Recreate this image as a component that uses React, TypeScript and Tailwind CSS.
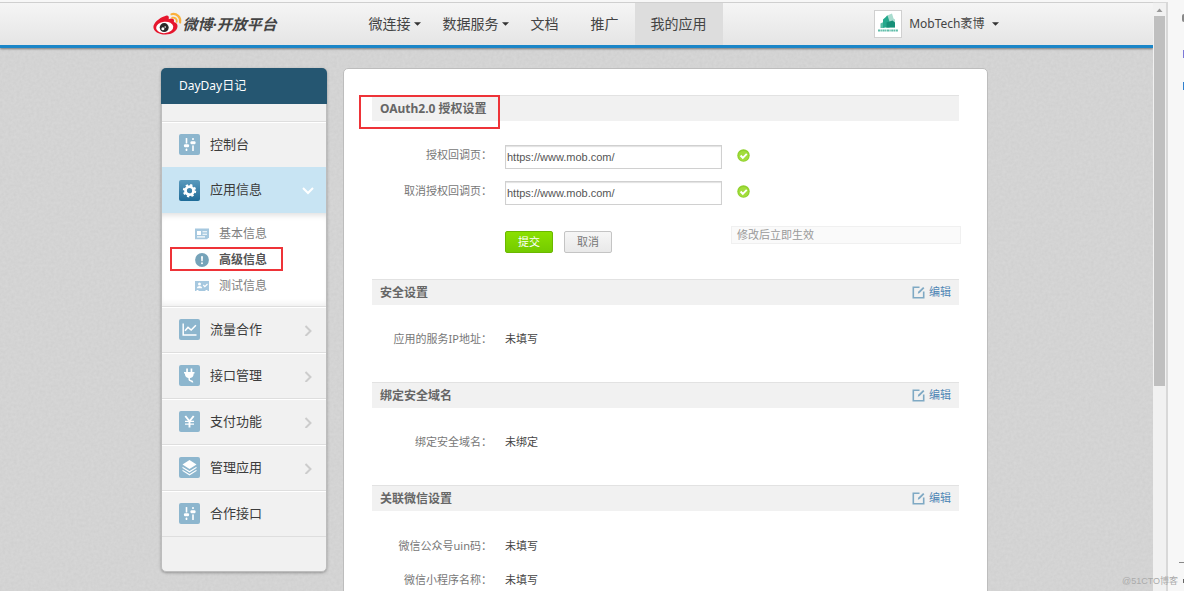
import React, { useState } from "react";

type IconProps = { className?: string };

const WeiboLogo = () => (
  <svg viewBox="0 0 30 24" className="h-6 w-[30px] shrink-0" aria-hidden="true">
    <path
      d="M11.600 4.200C15 2.600 16.400 4.400 15.700 7.200c3.300-1.300 6-.7 5.200 2.700 2.700.9 3.800 2.400 3.600 4.600-.4 4.700-5.600 8-12 8C5.600 22.500.4 19.300.4 14.900c0-3.800 5.600-9 11.200-10.700z"
      fill="#e6162d"
    />
    <ellipse cx="11.700" cy="15.400" rx="8.600" ry="5.700" fill="#fff" transform="rotate(-6 11.700 15.400)" />
    <circle cx="11.200" cy="15.600" r="4.500" fill="#2a2a2a" />
    <circle cx="9.900" cy="16.800" r="1.500" fill="#fff" />
    <circle cx="12.200" cy="15" r=".8" fill="#fff" />
    <path d="M18.500 2.200c5-1.200 9.700 2.800 8.600 8.300" fill="none" stroke="#fbb03b" strokeWidth="2.200" strokeLinecap="round" />
    <path d="M19.200 5.700c2.700-.6 5.100 1.400 4.500 4.200" fill="none" stroke="#fbb03b" strokeWidth="1.900" strokeLinecap="round" />
  </svg>
);

const Caret = () => (
  <svg viewBox="0 0 8 4" className="h-1 w-[7px] shrink-0" aria-hidden="true">
    <path d="M0 0h8L4 4z" fill="#333" />
  </svg>
);

const Sliders = () => (
  <g fill="#fff">
    <rect x="6.700" y="4" width="1.600" height="5.500" rx=".6" />
    <rect x="5" y="10.300" width="5" height="3" rx="1" />
    <rect x="6.700" y="14.600" width="1.600" height="2.400" rx=".6" />
    <rect x="13.200" y="4" width="1.600" height="2" rx=".6" />
    <rect x="11.500" y="7.300" width="5" height="3" rx="1" />
    <rect x="13.200" y="11.300" width="1.600" height="5.700" rx=".6" />
  </g>
);

const Gear = () => (
  <g>
    <circle cx="10.500" cy="10.700" r="4" fill="none" stroke="#fff" strokeWidth="2.800" />
    <circle cx="10.500" cy="10.700" r="5.700" fill="none" stroke="#fff" strokeWidth="2" strokeDasharray="2.240 2.240" />
  </g>
);

const Chart = () => (
  <g fill="none" stroke="#fff" strokeWidth="1.500">
    <path d="M4.200 4.500v11.500h13.300" />
    <path d="M6 11.800l3-3.400 3.200 2.700 4.700-4.800" />
  </g>
);

const Plug = () => (
  <g fill="#fff">
    <rect x="7.200" y="3.500" width="1.700" height="4" />
    <rect x="11.600" y="3.500" width="1.700" height="4" />
    <path d="M5 7h10.500v1.600h-.8c0 3-1.600 4.600-4.400 4.600S5.900 11.600 5.900 8.600H5z" />
    <path d="M10.200 12v2.500c0 2 3.400.4 3.400 3" fill="none" stroke="#fff" strokeWidth="1.500" />
  </g>
);

const Yen = () => (
  <g fill="none" stroke="#fff" strokeWidth="1.900">
    <path d="M6.300 5l4.200 5.300L14.700 5M10.500 10v6.500" />
    <path d="M6 10.300h9M6 13.100h9" strokeWidth="1.300" />
  </g>
);

const Layers = () => (
  <g fill="#fff">
    <path d="M10.500 3l7 4.500-7 4.500-7-4.500z" />
    <path d="M3.500 9.700l7 4.400 7-4.400v1.400l-7 4.400-7-4.400z" />
    <path d="M3.500 12.700l7 4.400 7-4.400v1.400l-7 4.400-7-4.400z" />
  </g>
);

const IconTile = ({ active, children }: { active?: boolean; children: React.ReactNode }) => (
  <svg
    viewBox="0 0 21 21"
    aria-hidden="true"
    className={
      active
        ? "size-[21px] shrink-0 rounded-xs bg-linear-to-b from-[#5a9abd] to-[#1d6b98]"
        : "size-[21px] shrink-0 rounded-xs bg-[#8db6ce]"
    }
  >
    {children}
  </svg>
);

const CardIcon = ({ className }: IconProps) => (
  <svg viewBox="0 0 14 14" className={className} aria-hidden="true">
    <path d="M0 1.500h14v8.800l-2 2H0z" fill="#a6c8df" />
    <rect x="2" y="4" width="4" height="4" fill="#fff" />
    <path d="M7.500 4.700H12M7.500 7.200H12M2 9.900h8" stroke="#fff" strokeWidth="1.100" />
  </svg>
);

const AlertIcon = ({ className }: IconProps) => (
  <svg viewBox="0 0 14 14" className={className} aria-hidden="true">
    <circle cx="7" cy="7" r="6.900" fill="#76a3b9" />
    <path d="M6 3.300h2L7.700 8.300H6.300z" fill="#fff" />
    <circle cx="7" cy="10.200" r="1" fill="#fff" />
  </svg>
);

const TesterIcon = ({ className }: IconProps) => (
  <svg viewBox="0 0 14 14" className={className} aria-hidden="true">
    <path d="M0 2h14v10h-1.500v-1h-2v1h-7v-1h-2v1H0z" fill="#a6c8df" />
    <circle cx="4.500" cy="5" r="1.500" fill="#fff" />
    <path d="M1.800 9.200c.3-3 5.100-3 5.400 0z" fill="#fff" />
    <path d="M8.300 6l1.500 1.600L12.500 5" fill="none" stroke="#fff" strokeWidth="1.200" />
  </svg>
);

const EditIcon = () => (
  <svg viewBox="0 0 13 13" className="size-[13px]" fill="none" stroke="#7fa9c4" strokeWidth="1.600" aria-hidden="true">
    <path d="M7.500 1.300H1.300v10.400h10.400V5.500" />
    <path d="M5.800 7.800l.4-2 4.900-4.900 1.300 1.300-4.800 4.900z" fill="#7fa9c4" stroke="none" />
  </svg>
);

const OkIcon = () => (
  <svg viewBox="0 0 13 13" className="mt-1 size-[13px]" role="img" aria-label="正确">
    <circle cx="6.500" cy="6.500" r="6.200" fill="#8fd02c" />
    <circle cx="6.500" cy="6.900" r="5" fill="#a2dd3c" />
    <path d="M3.600 6.500l2.200 2.400 4-4" fill="none" stroke="#fff" strokeWidth="1.900" />
  </svg>
);

const Chevron = ({ down }: { down?: boolean }) => (
  <svg viewBox="0 0 12 12" className="ml-auto size-3" fill="none" strokeWidth="2" aria-hidden="true">
    {down ? <path d="M1 4l5 5 5-5" stroke="#fff" /> : <path d="M3.500 2l5 5-5 5" stroke="#ccc" />}
  </svg>
);

const rowClass =
  "flex h-[46px] items-center gap-[10px] border-t border-t-[#dedede] pr-3 pl-[17px] text-[13px] text-[#3c3c3c] shadow-[inset_0_1px_0_#fff]";

const NavRow = ({ label, icon, arrow }: { label: string; icon: React.ReactNode; arrow?: boolean }) => (
  <li>
    <a href="#" className={rowClass}>
      <IconTile>{icon}</IconTile>
      {label}
      {arrow && <Chevron />}
    </a>
  </li>
);

const SubRow = ({ label, icon, current }: { label: string; icon: React.ReactNode; current?: boolean }) => (
  <li className="relative">
    <a
      href="#"
      className={
        current
          ? "flex h-[26px] items-center gap-[10px] pl-[33px] text-xs font-bold text-[#555]"
          : "flex h-[26px] items-center gap-[10px] pl-[33px] text-xs text-[#808080]"
      }
    >
      {icon}
      {label}
    </a>
    {current && <span className="absolute top-0 right-[43px] bottom-0.5 left-2 border-2 border-[#ee3338]" />}
  </li>
);

const SectionHead = ({ title, editable, marked }: { title: string; editable?: boolean; marked?: boolean }) => (
  <div className="relative flex h-[26px] items-center justify-between border-t border-[#e2e2e2] bg-[#f1f1f1] px-2">
    <h2 className="text-xs font-bold text-[#666]">{title}</h2>
    {editable && (
      <a href="#" className="flex items-center gap-1 text-[11px] text-[#4f86b5]">
        <EditIcon />
        编辑
      </a>
    )}
    {marked && <span className="absolute -top-px -left-[13px] h-[34px] w-[141px] border-2 border-[#ee3338]" />}
  </div>
);

const labelClass = "w-[120px] shrink-0 text-right leading-5 text-[#777]";

const Fact = ({ label, value }: { label: string; value: string }) => (
  <div className="flex h-[34px] items-center gap-[13px]">
    <dt className={labelClass}>{label}：</dt>
    <dd className="text-[#444]">{value}</dd>
  </div>
);

const UrlField = ({ id, label }: { id: string; label: string }) => {
  const [value, setValue] = useState("https://www.mob.com/");
  return (
    <div className="flex h-6 items-start">
      <label htmlFor={id} className={labelClass}>
        {label}：
      </label>
      <input
        id={id}
        type="text"
        value={value}
        onChange={(e) => setValue(e.target.value)}
        className="mr-[15px] ml-[13px] h-6 w-[217px] border border-[#d0d0d0] bg-white px-px font-['Liberation_Sans',sans-serif] text-[11px] text-[#555] shadow-[inset_0_1px_1px_#e2e2e2] outline-none"
      />
      <OkIcon />
    </div>
  );
};

const Header = () => (
  <header className="relative border-t border-[#cfcfcf] border-b-[3px] border-b-[#1b86c8] bg-linear-to-b from-[#f5f5f5] to-[#e5e5e5] pr-0.5 shadow-[0_1px_2px_#777]">
    <div className="mx-auto flex h-[42px] max-w-[846px] items-center">
      <a href="#" className="flex w-[200px] shrink-0 items-center text-[15px] font-bold text-[#444] italic">
        <WeiboLogo />
        <span className="whitespace-nowrap">微博·开放平台</span>
      </a>
      <nav className="flex h-full text-sm whitespace-nowrap text-[#444]">
        <a href="#" className="flex items-center gap-[3px] pr-1.5 pl-4">
          微连接
          <Caret />
        </a>
        <a href="#" className="flex items-center gap-[3px] pr-1.5 pl-4">
          数据服务
          <Caret />
        </a>
        <a href="#" className="flex items-center px-4">文档</a>
        <a href="#" className="flex items-center px-4">推广</a>
        <a href="#" className="flex items-center bg-[#dddddd] px-4">我的应用</a>
      </nav>
      <button type="button" className="ml-auto flex items-center gap-[7px] text-xs whitespace-nowrap text-[#444]">
        <span className="grid size-7 place-items-center border border-[#d0d0d0] bg-white">
          <svg viewBox="0 0 22 22" className="size-[22px]" aria-hidden="true">
            <path d="M9 3l6-2.500 1.500 5 1.500 1v8H9z" fill="#a9dccf" />
            <path d="M3.500 10.500l4-2v6.500h-4z" fill="#57bda5" />
            <path d="M6 6.500l4.500-4 2 6v6H6z" fill="#24a88c" />
            <path d="M9.500 14.500V9.500l6-2 2.500 2v5z" fill="#168f77" />
            <path d="M1 17.500h20" stroke="#5fbda9" strokeWidth="2" strokeDasharray="2.300 .4 1.200 .5" />
          </svg>
        </span>
        <span>MobTech袤博</span>
        <Caret />
      </button>
    </div>
  </header>
);

const Sidebar = () => (
  <aside className="w-[166px] shrink-0 self-start rounded-[5px] border border-[#bdbdbd] bg-[#f1f1f1] shadow-[0_1px_3px_rgba(0,0,0,0.3)]">
    <h1 className="-mx-px -mt-px flex h-9 items-center rounded-t-[5px] bg-[#255671] pl-[18px] text-xs text-white">DayDay日记</h1>
    <ul className="pt-[17px] pb-[34px]">
      <NavRow label="控制台" icon={<Sliders />} />
      <li>
        <a
          href="#"
          className="flex h-[46px] items-center gap-[10px] bg-[#c8e4f3] pr-3 pl-[17px] text-[13px] text-[#3c3c3c]"
        >
          <IconTile active>
            <Gear />
          </IconTile>
          应用信息
          <Chevron down />
        </a>
        <ul className="bg-white pt-2 pb-[7px] shadow-[inset_0_6px_6px_-4px_#ddd,inset_0_-6px_6px_-4px_#eee]">
          <SubRow label="基本信息" icon={<CardIcon className="size-[14px]" />} />
          <SubRow label="高级信息" icon={<AlertIcon className="size-[14px]" />} current />
          <SubRow label="测试信息" icon={<TesterIcon className="size-[14px]" />} />
        </ul>
      </li>
      <NavRow label="流量合作" icon={<Chart />} arrow />
      <NavRow label="接口管理" icon={<Plug />} arrow />
      <NavRow label="支付功能" icon={<Yen />} arrow />
      <NavRow label="管理应用" icon={<Layers />} arrow />
      <NavRow label="合作接口" icon={<Sliders />} />
      <li className="border-t border-[#dedede]" />
    </ul>
  </aside>
);

const Settings = () => (
  <main className="min-w-0 flex-1 rounded-[5px] border border-[#bdbdbd] bg-white px-7 pt-[26px] pb-10 text-[11px]">
    <form onSubmit={(e) => e.preventDefault()}>
      <SectionHead title="OAuth2.0 授权设置" marked />
      <div className="flex flex-col gap-3 pt-6">
        <UrlField id="callback" label="授权回调页" />
        <UrlField id="cancel-callback" label="取消授权回调页" />
      </div>
      <div className="flex items-start pt-[21px] pb-[26px] pl-[133px]">
        <div className="flex gap-[11px] pt-[5px]">
          <button
            type="submit"
            className="h-[22px] w-12 rounded-xs border border-[#6bb800] bg-linear-to-b from-[#8ae000] to-[#74cb00] text-white"
          >
            提交
          </button>
          <button
            type="button"
            className="h-[22px] w-12 rounded-xs border border-[#c4c4c4] bg-linear-to-b from-[#f6f6f6] to-[#e9e9e9] text-[#777]"
          >
            取消
          </button>
        </div>
        <p className="-mr-0.5 ml-auto flex h-[18px] w-[230px] items-center border border-[#f0f0f0] bg-[#fafafa] px-[5px] text-[#999]">
          修改后立即生效
        </p>
      </div>
    </form>
    <section className="pb-[26px]">
      <SectionHead title="安全设置" editable />
      <dl className="pt-[17px]">
        <Fact label="应用的服务IP地址" value="未填写" />
      </dl>
    </section>
    <section className="pb-[26px]">
      <SectionHead title="绑定安全域名" editable />
      <dl className="pt-[17px]">
        <Fact label="绑定安全域名" value="未绑定" />
      </dl>
    </section>
    <section>
      <SectionHead title="关联微信设置" editable />
      <dl className="pt-[18px]">
        <Fact label="微信公众号uin码" value="未填写" />
        <Fact label="微信小程序名称" value="未填写" />
      </dl>
    </section>
  </main>
);

export default function App() {
  return (
    <div className="relative flex h-screen overflow-hidden bg-[#f7f7f7] pt-0.5 font-['Noto_Sans','Noto_Sans_CJK_SC',sans-serif]">
      <div className="relative isolate min-w-0 flex-1 overflow-hidden bg-[#cfcfcf]">
        <svg className="absolute inset-0 -z-10 size-full opacity-20" aria-hidden="true">
          <filter id="paper">
            <feTurbulence type="fractalNoise" baseFrequency="0.35" numOctaves="2" />
            <feColorMatrix values="0.4 0 0 0 0.6  0.4 0 0 0 0.6  0.4 0 0 0 0.6  0 0 0 0 1" />
          </filter>
          <rect width="100%" height="100%" filter="url(#paper)" />
        </svg>
        <Header />
        <div className="pt-5 pr-1">
          <div className="mx-auto flex max-w-[827px] gap-4">
            <Sidebar />
            <Settings />
          </div>
        </div>
      </div>
      <div className="flex w-[15px] shrink-0 flex-col items-center border-t border-r-2 border-[#d8d8d8] bg-[#f1f1f1]">
        <svg viewBox="0 0 13 13" className="size-[13px] shrink-0" aria-hidden="true">
          <path d="M3.500 9h6L6.500 5.500z" fill="#999" />
        </svg>
        <div className="h-[63%] w-[11px] bg-[#bfbfbf]" />
      </div>
      <aside className="flex w-4 shrink-0 flex-col items-end bg-[#f7f7f7]">
        <span className="mt-3 h-2 w-0.5 rounded-l-full bg-[#888]" />
        <span className="mt-7 h-2 w-px bg-[#7d79d8]" />
        <span className="mt-6 h-2 w-px bg-[#2f80cf]" />
        <span className="mt-auto mb-4 h-px w-[5px] bg-[#888]" />
        <span className="mb-2 h-1 w-px bg-[#666]" />
      </aside>
      <span className="absolute right-1.5 bottom-0.5 font-['Liberation_Sans','Noto_Sans_CJK_SC',sans-serif] text-[9px] leading-4 text-[#aaaaaa]">
        @51CTO博客
      </span>
    </div>
  );
}
